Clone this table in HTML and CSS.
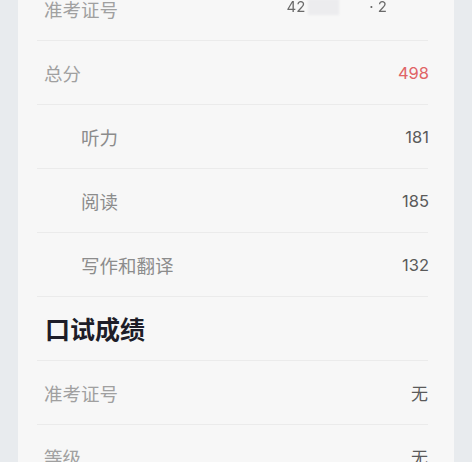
FILE: index.html
```html
<!DOCTYPE html>
<html lang="zh-CN">
<head>
<meta charset="utf-8">
<link rel="stylesheet" href="styles.css">
</head>
<body>
<div class="card">
  <div class="list">
    <div class="row">
      <span class="label">准考证号</span>
      <span class="value masked"><span class="m1">42</span><span class="mbox"></span><span class="m2">· 2</span></span>
    </div>
    <div class="row">
      <span class="label">总分</span>
      <span class="value num red">498</span>
    </div>
    <div class="row sub">
      <span class="label">听力</span>
      <span class="value num">181</span>
    </div>
    <div class="row sub">
      <span class="label">阅读</span>
      <span class="value num">185</span>
    </div>
    <div class="row sub">
      <span class="label">写作和翻译</span>
      <span class="value num">132</span>
    </div>
    <div class="row head">
      <span class="title">口试成绩</span>
    </div>
    <div class="row">
      <span class="label">准考证号</span>
      <span class="value">无</span>
    </div>
    <div class="row">
      <span class="label">等级</span>
      <span class="value">无</span>
    </div>
  </div>
</div>
</body>
</html>
```

FILE: styles.css
```css
html, body {
  margin: 0;
  padding: 0;
  height: 100%;
  overflow: hidden;
}
body {
  background: #e8ebee;
  padding: 0 18px;
  font-family: "Noto Sans CJK SC", "Noto Sans", sans-serif;
}
.card {
  display: flow-root;
  background: #f7f7f7;
  height: 100%;
  padding: 0 26px 0 19px;
}
.list {
  margin-top: -23px;
}
.row {
  height: 64px;
  box-sizing: border-box;
  border-bottom: 1px solid #ebebeb;
  display: flex;
  align-items: center;
  justify-content: space-between;
  padding-left: 7px;
}
.row.sub {
  padding-left: 44px;
}
.row.head {
  padding-left: 8px;
}
.label {
  font-size: 18.5px;
  color: #a0a0a0;
}
.row.sub .label {
  color: #8c8c8c;
}
.value {
  font-size: 17px;
  color: #5a5a5a;
}
.num {
  font-family: "Inter", "Noto Sans", sans-serif;
  font-size: 16.5px;
  margin-right: -1px;
}
.red {
  color: #e06466;
}
.title {
  font-size: 25px;
  font-weight: 700;
  color: #1d1d28;
  line-height: 1;
}
.masked {
  display: flex;
  align-items: center;
  margin-right: 41px;
  margin-top: -4px;
  color: #6a6a6a;
  font-family: "Inter", sans-serif;
  font-size: 15px;
}
.m1 {
  filter: blur(0.5px);
  margin-right: 0;
}
.mbox {
  width: 31px;
  height: 16px;
  background: #ececee;
  margin: 0 30px 0 3px;
  filter: blur(1px);
}
.m2 {
  filter: blur(0.5px);
}
```
